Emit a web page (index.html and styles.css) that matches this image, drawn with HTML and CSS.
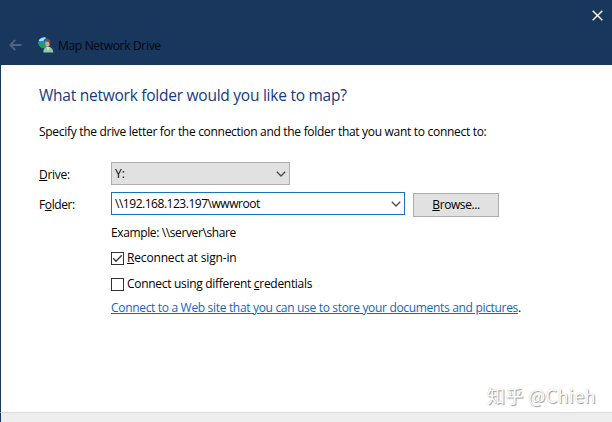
FILE: index.html
```
<!DOCTYPE html>
<html lang="en">
<head>
<meta charset="utf-8">
<title>Map Network Drive</title>
<link rel="stylesheet" href="styles.css">
</head>
<body>
<div class="dialog">
  <header class="titlebar">
    <div class="caption">
      <svg class="close" width="11" height="11" viewBox="0 0 11 11"><path d="M.7.7l9.6 9.6M10.3.7L.7 10.3"/></svg>
    </div>
    <div class="nav">
      <svg class="back" width="13" height="12" viewBox="0 0 13 12"><path d="M12.5 6H1.5M6.2 1L1.2 6l5 5"/></svg>
      <svg class="app-icon" width="16" height="16" viewBox="0 0 16 16">
        <circle cx="5.7" cy="5.7" r="5.5" fill="#248cc9"/>
        <path d="M1 3Q4-.5 8 .4L5 4 1 4z" fill="#a8e2ed"/>
        <path d="M1 7l4-1 2 2-1 3Q2 11 1 7z" fill="#20a52e"/>
        <path d="M6 3l3-2 1 4-3 2z" fill="#1559ad"/>
        <path d="M5.4 15.5Q5 11 8.4 10h3.4q3 1 3.6 5.5z" fill="#92c9a0"/>
        <path d="M8.5 10l1.4 4 1.8-4z" fill="#d4e6cc"/>
        <ellipse cx="9.6" cy="6.3" rx="2.4" ry="3.4" fill="#d9a581"/>
        <path d="M7.2 4.2Q8 1.4 11 2.4q2.4 1.8.6 5.6l-.8-3z" fill="#775044"/>
      </svg>
      <span class="title">Map Network Drive</span>
    </div>
  </header>
  <main class="content">
    <h1 class="heading">What network folder would you like to map?</h1>
    <p class="intro">Specify the drive letter for the connection and the folder that you want to connect to:</p>
    <div class="row drive-row">
      <span class="label"><u>D</u>rive:</span>
      <div class="select drive"><span>Y:</span><svg class="chevron" width="10" height="6" viewBox="0 0 10 6"><path d="M.8.8L5 5 9.2.8"/></svg></div>
    </div>
    <div class="row folder-row">
      <span class="label t-folder">F<u>o</u>lder:</span>
      <div class="select folder"><span class="t-path">\\192.168.123.197\wwwroot</span><svg class="chevron" width="10" height="6" viewBox="0 0 10 6"><path d="M.8.8L5 5 9.2.8"/></svg></div>
      <div class="browse"><u>B</u>rowse...</div>
    </div>
    <div class="options">
      <p class="example">Example: \\server\share</p>
      <div class="check"><span class="box"><svg width="11" height="11" viewBox="0 0 11 11"><path d="M1.2 5.3L4 8.2 9.8 2.2"/></svg></span><span class="t-reconnect"><u>R</u>econnect at sign-in</span></div>
      <div class="check"><span class="box"></span><span>Connect using different <u>c</u>redentials</span></div>
      <p class="web"><span class="link">Connect to a Web site that you can use to store your documents and pictures</span>.</p>
    </div>
  </main>
  <footer class="footer"></footer>
  <div class="watermark">知乎 @Chieh</div>
</div>
</body>
</html>
```
FILE: styles.css
```
* { box-sizing: border-box; }
body {
  margin: 0;
  font: 12px/16px "Open Sans", "Noto Sans", sans-serif;
  color: #000;
}
h1, p { margin: 0; font-weight: 400; }
u { text-decoration: underline; text-decoration-thickness: 1px; text-underline-offset: 1px; }
span { white-space: nowrap; }
.dialog {
  position: relative;
  display: flex;
  flex-direction: column;
  width: 612px;
  height: 422px;
  overflow: hidden;
  background: #fff;
}
.titlebar { height: 65px; background: #19365c; }
.caption { display: flex; justify-content: flex-end; height: 37px; padding: 10px 9px 0 0; }
.close { fill: none; stroke: #fff; stroke-width: 1.4; }
.nav { display: flex; height: 16px; align-items: center; padding-left: 9px; }
.back { fill: none; stroke: #506482; stroke-width: 1.8; }
.app-icon { margin: 0 4px 0 16px; }
.title { padding-top: 2px; color: #030810; letter-spacing: -.32px; }
.content { flex: 1; border-left: 1px solid #19365c; padding: 18px 0 0 38px; }
.heading {
  height: 24px;
  color: #16397f;
  font-size: 15.5px;
  line-height: 24px;
  letter-spacing: -.25px;
  white-space: nowrap;
}
.intro { margin-top: 17px; white-space: nowrap; letter-spacing: -.3px; }
.row { display: flex; align-items: flex-start; height: 23px; }
.drive-row { margin-top: 22px; }
.folder-row { margin-top: 7px; }
.label { width: 72px; padding-top: 5px; letter-spacing: -.3px; }
.t-folder { letter-spacing: -.4px; }
.select {
  display: flex;
  justify-content: space-between;
  align-items: center;
  height: 23px;
  padding: 0 3px 0 3px;
  border: 1px solid #adadad;
}
.drive { width: 179px; background: #e1e1e1; }
.folder { width: 294px; border-color: #1874b4; }
.chevron { fill: none; stroke: #4a4a4a; stroke-width: 1.3; }
.t-path { letter-spacing: -.47px; }
.browse {
  width: 86px;
  height: 24px;
  margin: 1px 0 0 8px;
  padding-top: 3px;
  border: 1px solid #adadad;
  background: #e1e1e1;
  text-align: center;
  letter-spacing: -.42px;
}
.options { padding: 10px 0 0 72px; letter-spacing: -.3px; }
.example { letter-spacing: -.38px; }
.check { display: flex; gap: 3px; align-items: center; height: 16px; margin-top: 10px; }
.example + .check { margin-top: 9px; }
.t-reconnect { letter-spacing: -.16px; }
.box { display: flex; width: 13px; height: 13px; border: 1px solid #333; }
.box svg { fill: none; stroke: #333; stroke-width: 1.3; }
.web { margin-top: 8px; letter-spacing: -.32px; }
.link { color: #1266bb; text-decoration: underline; text-underline-offset: 1px; }
.footer { height: 10px; border-left: 1px solid #19365c; border-top: 1px solid #dcdcdc; background: #eee; }
.watermark {
  position: absolute;
  left: 487px;
  top: 383px;
  font: 18px/24px "Noto Sans CJK SC", sans-serif;
  letter-spacing: .4px;
  color: #fff;
  text-shadow: 1px 1px 1px #999, 0 0 1px #bbb;
  white-space: nowrap;
}
```
